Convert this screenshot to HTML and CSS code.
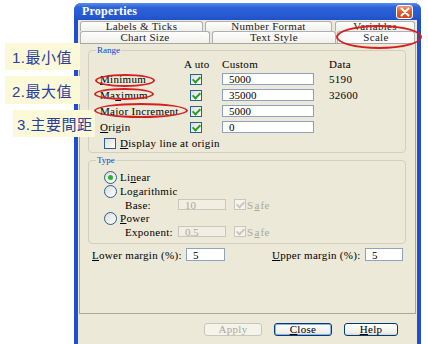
FILE: index.html
```html
<!DOCTYPE html>
<html lang="zh-Hant">
<head>
    <meta charset="UTF-8">
    <title>Properties - Scale</title>
    <link rel="stylesheet" href="styles.css">
</head>
<body>
<div class="stage">
    <div class="window">
        <div class="titlebar">
            <span class="title">Properties</span>
            <span class="close-x">
                <svg width="10" height="10" viewBox="0 0 10 10"><path d="M1.5 1.5 L8.5 8.5 M8.5 1.5 L1.5 8.5" stroke="#fff" stroke-width="2" stroke-linecap="round"/></svg>
            </span>
        </div>
        <div class="client">
            <div class="tab-row back">
                <div class="tab t-labels">Labels &amp; Ticks</div>
                <div class="tab t-number">Number Format</div>
                <div class="tab t-vars">Variables</div>
            </div>
            <div class="tab-row front">
                <div class="tab t-chart">Chart Size</div>
                <div class="tab t-text">Text Style</div>
                <div class="tab t-scale active">Scale</div>
            </div>

            <div class="page">
                <fieldset class="group range">
                    <legend>Range</legend>
                    <div class="range-grid">
                        <span></span>
                        <span class="hdr">A uto</span>
                        <span class="hdr">Custom</span>
                        <span class="hdr">Data</span>

                        <label><u>M</u>inimum</label>
                        <span class="cb on"></span>
                        <input class="field" type="text" value="5000">
                        <span class="data">5190</span>

                        <label>Ma<u>x</u>imum</label>
                        <span class="cb on"></span>
                        <input class="field" type="text" value="35000">
                        <span class="data">32600</span>

                        <label>Major <u>I</u>ncrement</label>
                        <span class="cb on"></span>
                        <input class="field" type="text" value="5000">
                        <span class="data"></span>

                        <label><u>O</u>rigin</label>
                        <span class="cb on"></span>
                        <input class="field" type="text" value="0">
                        <span class="data"></span>
                    </div>
                    <div class="line-opt"><span class="cb"></span><span><u>D</u>isplay line at origin</span></div>
                </fieldset>

                <fieldset class="group type">
                    <legend>Type</legend>
                    <div class="opt"><span class="radio on"></span><span>Li<u>n</u>ear</span></div>
                    <div class="opt"><span class="radio"></span><span>Lo<u>g</u>arithmic</span></div>
                    <div class="sub">
                        <span>Base:</span>
                        <input class="field small" type="text" value="10" disabled>
                        <span class="safe"><span class="cb on off"></span>S<u>a</u>fe</span>
                    </div>
                    <div class="opt"><span class="radio"></span><span><u>P</u>ower</span></div>
                    <div class="sub last">
                        <span>Exponent:</span>
                        <input class="field small" type="text" value="0.5" disabled>
                        <span class="safe"><span class="cb on off"></span>S<u>a</u>fe</span>
                    </div>
                </fieldset>

                <div class="margins">
                    <span><u>L</u>ower margin (%):</span>
                    <input class="field" type="text" value="5">
                    <span></span>
                    <span><u>U</u>pper margin (%):</span>
                    <input class="field" type="text" value="5">
                </div>
            </div>

            <div class="footer">
                <button class="btn apply" disabled>Apply</button>
                <button class="btn default"><u>C</u>lose</button>
                <button class="btn help"><u>H</u>elp</button>
            </div>
        </div>
    </div>

    <!-- notes drawn over the screenshot -->
    <div class="note n1">1.最小值</div>
    <div class="note n2">2.最大值</div>
    <div class="note n3">3.主要間距</div>

    <div class="ring r-min"></div>
    <div class="ring r-max"></div>
    <div class="ring r-major"></div>
    <div class="ring r-scale"></div>
</div>
</body>
</html>
```

FILE: styles.css
```css
/* Windows XP style dialog with teaching notes on top */
* {
    box-sizing: border-box;
}
body {
    margin: 0;
    background: #fff;
    font-family: "Liberation Serif", serif;
    font-size: 11px;
    color: #000;
}
.stage {
    position: relative;
    width: 428px;
    height: 344px;
    overflow: hidden;
}
.window {
    position: absolute;
    left: 74px;
    top: 3px;
    width: 347px;
    height: 345px;
    padding: 0 4px;
    background: #1d4fcf;
    border-radius: 7px 7px 0 0;
    display: flex;
    flex-direction: column;
}
.titlebar {
    height: 17px;
    margin: 0 -4px;
    padding: 0 8px 0 8px;
    display: flex;
    align-items: center;
    justify-content: space-between;
    background: linear-gradient(to bottom, #5b8ff0 0%, #2c63d8 25%, #2659d2 75%, #1f50c8 100%);
    border-radius: 7px 7px 0 0;
}
.title {
    color: #fff;
    font-weight: bold;
    font-size: 12px;
    letter-spacing: 0.2px;
}
.close-x {
    width: 17px;
    height: 14px;
    display: flex;
    align-items: center;
    justify-content: center;
    border: 1px solid #fff;
    border-radius: 3px;
    background: linear-gradient(to bottom, #ee9a78, #e0602f 45%, #cc4a1f);
}
.client {
    flex: 1;
    background: #ece9d8;
    padding-top: 1px;
}
.tab-row {
    display: flex;
    padding-left: 2px;
}
.tab {
    text-align: center;
    border: 1px solid #aab0b5;
    border-bottom: none;
    border-radius: 3px 3px 0 0;
    background: linear-gradient(to bottom, #fefefe, #f1f0ea);
    color: #222;
    letter-spacing: 0.3px;
}
.back .tab {
    height: 10px;
    line-height: 9px;
}
.front .tab {
    height: 12px;
    line-height: 11px;
}
.t-labels { width: 123px; margin-right: 2px; }
.t-number { width: 127px; margin-right: 3px; }
.t-vars { width: 80px; }
.t-chart { width: 130px; margin-right: 2px; }
.t-text { width: 124px; margin-right: 1px; }
.t-scale { width: 78px; }
.tab.active {
    background: #fcfcfe;
}
.page {
    margin: 0 1px;
    height: 271px;
    border: 1px solid #a7a99c;
    background: #ece9d8;
}
.group {
    margin: 0 0 0 8px;
    width: 318px;
    min-width: 0;
    padding: 1px 0 1px 0;
    border: 1px solid #d0d0bf;
    border-radius: 4px;
}
.group legend {
    margin-left: 7px;
    padding: 0 1px;
    line-height: 12px;
    font-size: 9px;
    color: #0046d5;
}
.range-grid {
    margin-left: 11px;
    display: grid;
    grid-template-columns: 84px 38px 107px auto;
    grid-template-rows: 14px repeat(4, 16px);
    align-items: center;
    letter-spacing: 0.3px;
}
.range-grid label {
    white-space: nowrap;
}
.range-grid .cb {
    margin-left: 6px;
}
.field {
    width: 92px;
    height: 12px;
    padding: 0 0 0 6px;
    border: 1px solid #8ea4bd;
    background: #fff;
    font-family: "Liberation Serif", serif;
    font-size: 11px;
    line-height: 10px;
    color: #000;
    outline: none;
}
.field.small {
    width: 48px;
    height: 11px;
    border-color: #c9c7ba;
    background: #f1efe4;
    color: #aca899;
}
.cb {
    position: relative;
    display: inline-block;
    flex: none;
    width: 12px;
    height: 11px;
    border: 1px solid #2a5f8e;
    background: linear-gradient(135deg, #dcdcd7, #fff);
}
.cb.on::after {
    content: "";
    position: absolute;
    left: 3px;
    top: 0;
    width: 3px;
    height: 6px;
    border: solid #21a121;
    border-width: 0 2px 2px 0;
    transform: rotate(45deg);
}
.cb.off {
    border-color: #c9c7ba;
    background: #f4f3ee;
}
.cb.off::after {
    border-color: #c9c7ba;
}
.line-opt {
    height: 16px;
    margin-left: 15px;
    display: flex;
    align-items: center;
    gap: 4px;
    letter-spacing: 0.3px;
}
.type {
    margin-top: 1px;
    padding: 4px 0 5px 0;
}
.opt {
    height: 14px;
    margin-left: 15px;
    display: flex;
    align-items: center;
    gap: 3px;
    letter-spacing: 0.3px;
}
.radio {
    position: relative;
    width: 13px;
    height: 13px;
    border: 1px solid #2a5f8e;
    border-radius: 50%;
    background: linear-gradient(135deg, #dcdcd7, #fff);
}
.radio.on::after {
    content: "";
    position: absolute;
    left: 3px;
    top: 3px;
    width: 5px;
    height: 5px;
    border-radius: 50%;
    background: #2fb42f;
}
.sub {
    height: 13px;
    margin-left: 36px;
    display: grid;
    grid-template-columns: 53px 48px auto;
    align-items: center;
    letter-spacing: 0.3px;
}
.safe {
    margin-left: 8px;
    display: flex;
    align-items: center;
    gap: 1px;
    color: #aca899;
}
.margins {
    margin: 4px 0 0 12px;
    height: 13px;
    display: grid;
    grid-template-columns: 94px 39px 47px 93px 38px;
    align-items: center;
    letter-spacing: 0.3px;
    white-space: nowrap;
}
.margins .field {
    width: 100%;
    height: 13px;
}
.footer {
    padding: 9px 19px 0 0;
    display: flex;
    justify-content: flex-end;
    gap: 12px;
}
.btn {
    width: 58px;
    height: 13px;
    padding: 0;
    border: 1px solid #003c74;
    border-radius: 3px;
    background: linear-gradient(to bottom, #fff, #f0efe9 80%, #d8d2c6);
    font-family: "Liberation Serif", serif;
    font-size: 11px;
    line-height: 11px;
    color: #000;
    letter-spacing: 0.3px;
}
.btn.help {
    width: 54px;
}
.btn.default {
    box-shadow: inset 0 0 0 1px #8db2ec;
}
.btn.apply {
    border-color: #c9c7ba;
    background: #f5f4ea;
    color: #aca899;
}
.note {
    position: absolute;
    display: flex;
    align-items: center;
    padding-left: 7px;
    background: #fcf9d9;
    color: #2b3d9d;
    font-family: "Liberation Sans", "Noto Sans CJK TC", sans-serif;
    font-size: 15px;
    letter-spacing: 0.5px;
}
.n1 { left: 5px; top: 43px; width: 75px; height: 27px; }
.n2 { left: 5px; top: 76px; width: 75px; height: 28px; }
.n3 { left: 13px; top: 110px; width: 82px; height: 27px; padding-left: 4px; }
.ring {
    position: absolute;
    border: 2px solid #d61f1f;
    border-radius: 50%;
}
.r-min { left: 95px; top: 74px; width: 60px; height: 13px; }
.r-max { left: 94px; top: 88px; width: 60px; height: 12px; }
.r-major { left: 94px; top: 103px; width: 94px; height: 15px; }
.r-scale { left: 336px; top: 25px; width: 86px; height: 24px; }
```
